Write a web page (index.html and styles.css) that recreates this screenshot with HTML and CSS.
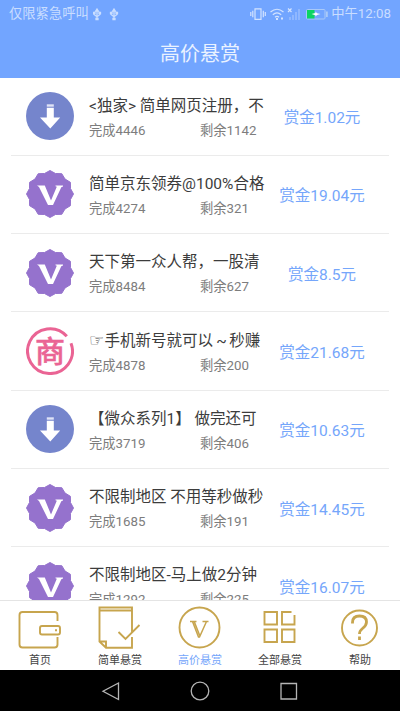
FILE: index.html
```
<!DOCTYPE html>
<html lang="zh-CN">
<head>
<meta charset="utf-8">
<title>高价悬赏</title>
<link rel="stylesheet" href="styles.css">
</head>
<body>
<svg class="defs" width="0" height="0" aria-hidden="true">
  <symbol id="down" viewBox="0 0 48 48">
    <circle cx="24" cy="24" r="24" fill="#7585cc"/>
    <path d="M20.800 12.300h7v2.400h-7z" fill="#dfe3f6"/>
    <path d="M20.800 15.800h7v9.700h6.400L24.300 36.500 14 25.500h6.800z" fill="#fff"/>
  </symbol>
  <symbol id="vip" viewBox="0 0 48 48">
    <path d="M24 .5L29.500 3.500 35.800 3.700 39 9 44.400 12.300 44.500 18.500 47.500 24 44.500 29.500 44.400 35.700 39 39 35.800 44.300 29.500 44.500 24 47.500 18.500 44.500 12.200 44.300 9 39 3.600 35.700 3.500 29.500.5 24 3.500 18.500 3.600 12.300 9 9 12.200 3.700 18.500 3.500z" fill="#9572cd" stroke="#9572cd" stroke-width="1" stroke-linejoin="round"/>
    <path d="M11 15.500h7.800L25 30.500l5.800-13.800-1.300-.4v-.8H37v1L35.300 17.300 27 35h-5L13 17z" fill="#fff"/>
  </symbol>
</svg>
<div class="phone">
  <header class="header">
    <div class="status">
      <span class="carrier">仅限紧急呼叫</span>
      <svg class="usb" width="26" height="13" viewBox="0 0 26 13">
        <g id="plug" fill="none" stroke="#c9ddff" stroke-width="1.300"><path d="M4 1.500v10.500M1 4v2.500L4 8.800l3-2.300V4"/><path d="M2.700 3L4 1l1.300 2zM3 10.500h2v1H3zM.5 4.500h1.500v1H.5zM6 4.500h1.500v1H6z" fill="#c9ddff"/></g>
        <use href="#plug" x="17"/>
      </svg>
      <span class="spacer"></span>
      <svg class="signals" width="80" height="14" viewBox="0 0 80 14">
        <g fill="none" stroke="#d3e3ff" stroke-width="1.200">
          <path d="M5 1.800h6v10.500H5zM2.800 3.800v6.500M13.300 3.800v6.500M.8 5v4M15.300 5v4"/>
          <path d="M20.500 5q6.500-5.500 13 0M22.800 7.700q4.200-3.600 8.400 0M25 10.200q2-1.700 4 0"/>
          <path d="M38 1.500l3.500 3.500M41.500 1.500L38 5"/>
        </g>
        <path d="M26 11h2v2h-2zM31 10.500h2v2h-2z" fill="#d3e3ff"/>
        <path d="M39 10h2v3h-2zM42 8h2v5h-2zM45 5h2v8h-2zM48 2h2v11h-2z" fill="#8fb7ff"/>
        <rect x="56.500" y="2.500" width="18.500" height="9.500" rx="1" fill="none" stroke="#a9c9f8"/>
        <path d="M57 3h7.500v8.500H57z" fill="#0bd463"/>
        <path d="M76 4.500h1.800v5.500H76z" fill="#a9c9f8"/>
        <path d="M61.500 7l4-1V4.500l1.500 1.800 3.500.7-3.500.9-1.500 1.700V8.200z" fill="#fff"/>
      </svg>
      <span class="clock">中午12:08</span>
    </div>
    <h1 class="title">高价悬赏</h1>
  </header>

  <main class="list">
    <article class="row"><svg class="badge"><use href="#down"/></svg><div class="info"><h2>&lt;独家&gt; 简单网页注册，不</h2><p><span>完成4446</span><span>剩余1142</span></p></div><div class="reward">赏金1.02元</div></article>
    <article class="row"><svg class="badge"><use href="#vip"/></svg><div class="info"><h2>简单京东领券@100%合格</h2><p><span>完成4274</span><span>剩余321</span></p></div><div class="reward">赏金19.04元</div></article>
    <article class="row"><svg class="badge"><use href="#vip"/></svg><div class="info"><h2>天下第一众人帮，一股清</h2><p><span>完成8484</span><span>剩余627</span></p></div><div class="reward">赏金8.5元</div></article>
    <article class="row"><svg class="badge" viewBox="0 0 48 48"><path d="M40.800 9.300A22.400 22.400 0 1 0 45 16.300" fill="none" stroke="#ea6494" stroke-width="3"/><text class="shop-mark" x="24" y="34.500" text-anchor="middle">商</text></svg><div class="info"><h2><span class="hand">☞</span>手机新号就可以<span class="tilde"> ~ </span>秒赚</h2><p><span>完成4878</span><span>剩余200</span></p></div><div class="reward">赏金21.68元</div></article>
    <article class="row"><svg class="badge"><use href="#down"/></svg><div class="info"><h2>【微众系列1】 做完还可</h2><p><span>完成3719</span><span>剩余406</span></p></div><div class="reward">赏金10.63元</div></article>
    <article class="row"><svg class="badge"><use href="#vip"/></svg><div class="info"><h2>不限制地区 不用等秒做秒</h2><p><span>完成1685</span><span>剩余191</span></p></div><div class="reward">赏金14.45元</div></article>
    <article class="row"><svg class="badge"><use href="#vip"/></svg><div class="info"><h2>不限制地区-马上做2分钟</h2><p><span>完成1292</span><span>剩余225</span></p></div><div class="reward">赏金16.07元</div></article>
  </main>

  <nav class="tabs">
    <a class="tab">
      <svg viewBox="0 0 48 48"><path d="M41.500 18V12q0-3-3-3h-32q-3 0-3 3v29.500q0 3 3 3h32q3 0 3-3V34M26 23h16q2 0 2 2v4.500q0 2-2 2H26q-2 0-2-2V25q0-2 2-2z"/><path d="M39 27.200h2"/></svg>
      <span>首页</span>
    </a>
    <a class="tab">
      <svg viewBox="0 0 48 48"><path d="M36 29V4.500H3.500V38.500L10 44.800h26V34M3.500 38.500H10v6.300M4 7.500h31.500M22.500 29l7 7L43.500 22"/></svg>
      <span>简单悬赏</span>
    </a>
    <a class="tab active">
      <svg viewBox="0 0 48 48"><circle cx="23.500" cy="24.500" r="20"/><path d="M14 18.500h6.500M26.500 18.500h6M16.500 18.500L22.500 34h1l7-15.500M18.200 18.500l5.500 14" stroke-width="1.500"/></svg>
      <span>高价悬赏</span>
    </a>
    <a class="tab">
      <svg viewBox="0 0 48 48"><path d="M8.500 9H21v12.500H8.500zM38.500 12v9.500H26V9h9.500M8.500 26.500H21V39H8.500zM26 26.500h12.500V39H26z"/></svg>
      <span>全部悬赏</span>
    </a>
    <a class="tab">
      <svg viewBox="0 0 48 48"><circle cx="23.500" cy="25" r="17.500"/><path d="M16.500 20.500v-1q0-6.500 7-6.500t7 6q0 3.500-4 6.500-3 2.300-3 5.500M23.500 33.500v3.500" stroke-width="2.800"/></svg>
      <span>帮助</span>
    </a>
  </nav>

  <footer class="system">
    <svg viewBox="0 0 20 20"><path d="M17.500 2v16.500L2 10.200z"/></svg>
    <svg viewBox="0 0 20 20"><circle cx="10" cy="10" r="8.800"/></svg>
    <svg viewBox="0 0 20 20"><path d="M2 2.500h15.500V18H2z"/></svg>
  </footer>
</div>
</body>
</html>
```

FILE: styles.css
```
* {
  box-sizing: border-box;
  margin: 0;
  padding: 0;
}

body {
  background: #fff;
  font-family: Roboto, "Noto Sans CJK SC", sans-serif;
}

.defs {
  display: block;
}

.phone {
  display: flex;
  flex-direction: column;
  width: 400px;
  height: 711px;
  overflow: hidden;
}

.header {
  flex: none;
  height: 77.500px;
  background: #72a5ff;
}

.status {
  display: flex;
  align-items: center;
  height: 28px;
  padding: 0 9px;
  color: #c9ddff;
  font-size: 13.300px;
  line-height: 28px;
}

.usb {
  margin-left: 4px;
}

.spacer {
  flex: 1;
}

.clock {
  margin-left: 1px;
}

.title {
  height: 49px;
  color: #eaf2ff;
  font-size: 20px;
  font-weight: 400;
  line-height: 53px;
  text-align: center;
}

.list {
  flex: 1;
  min-height: 0;
  overflow: hidden;
}

.row {
  display: flex;
  align-items: center;
  height: 78.300px;
  margin: 0 11px;
  padding-left: 15px;
  border-bottom: 1px solid #ebebeb;
}

.badge {
  flex: none;
  width: 48px;
  height: 48px;
}

.shop-mark {
  fill: #ea6494;
  stroke: #ea6494;
  stroke-width: .5px;
  font-family: "Noto Sans CJK SC", sans-serif;
  font-size: 30px;
  font-weight: 500;
}

.info {
  flex: none;
  width: 182px;
  margin-left: 15px;
  padding-top: 3px;
  white-space: nowrap;
}

.info h2 {
  height: 26px;
  color: #3c3c3c;
  font-size: 15.500px;
  font-weight: 400;
  line-height: 26px;
}

.hand {
  display: inline-block;
  width: 15.500px;
  font-family: "DejaVu Sans", sans-serif;
  font-size: 17px;
  line-height: 1;
}

.tilde {
  letter-spacing: -.7px;
}

.info p {
  display: flex;
  height: 24px;
  color: #7d7d7d;
  font-size: 13.300px;
  line-height: 24px;
}

.info p span {
  flex: none;
  width: 111px;
}

.info p span + span {
  width: 71px;
}

.reward {
  width: 102px;
  color: #75a6fb;
  font-size: 15.500px;
  text-align: center;
  white-space: nowrap;
}

.tabs {
  display: flex;
  flex: none;
  height: 70.500px;
  border-top: 1px solid #e4e4e4;
  background: #fff;
}

.tab {
  display: flex;
  flex: 1;
  flex-direction: column;
  align-items: center;
  color: #444;
  font-size: 11px;
  line-height: 16px;
}

.tab svg {
  width: 48px;
  height: 48px;
  margin-top: 2px;
  fill: none;
  stroke: #c7a54e;
  stroke-width: 1.900;
}

.tab span {
  margin-top: 2px;
}

.tab.active {
  color: #75a6fb;
}

.system {
  display: flex;
  flex: none;
  align-items: center;
  justify-content: center;
  gap: 69px;
  height: 41px;
  background: #000;
}

.system svg {
  width: 20px;
  height: 20px;
  fill: none;
  stroke: #b5b5b5;
  stroke-width: 1.300;
}
```
